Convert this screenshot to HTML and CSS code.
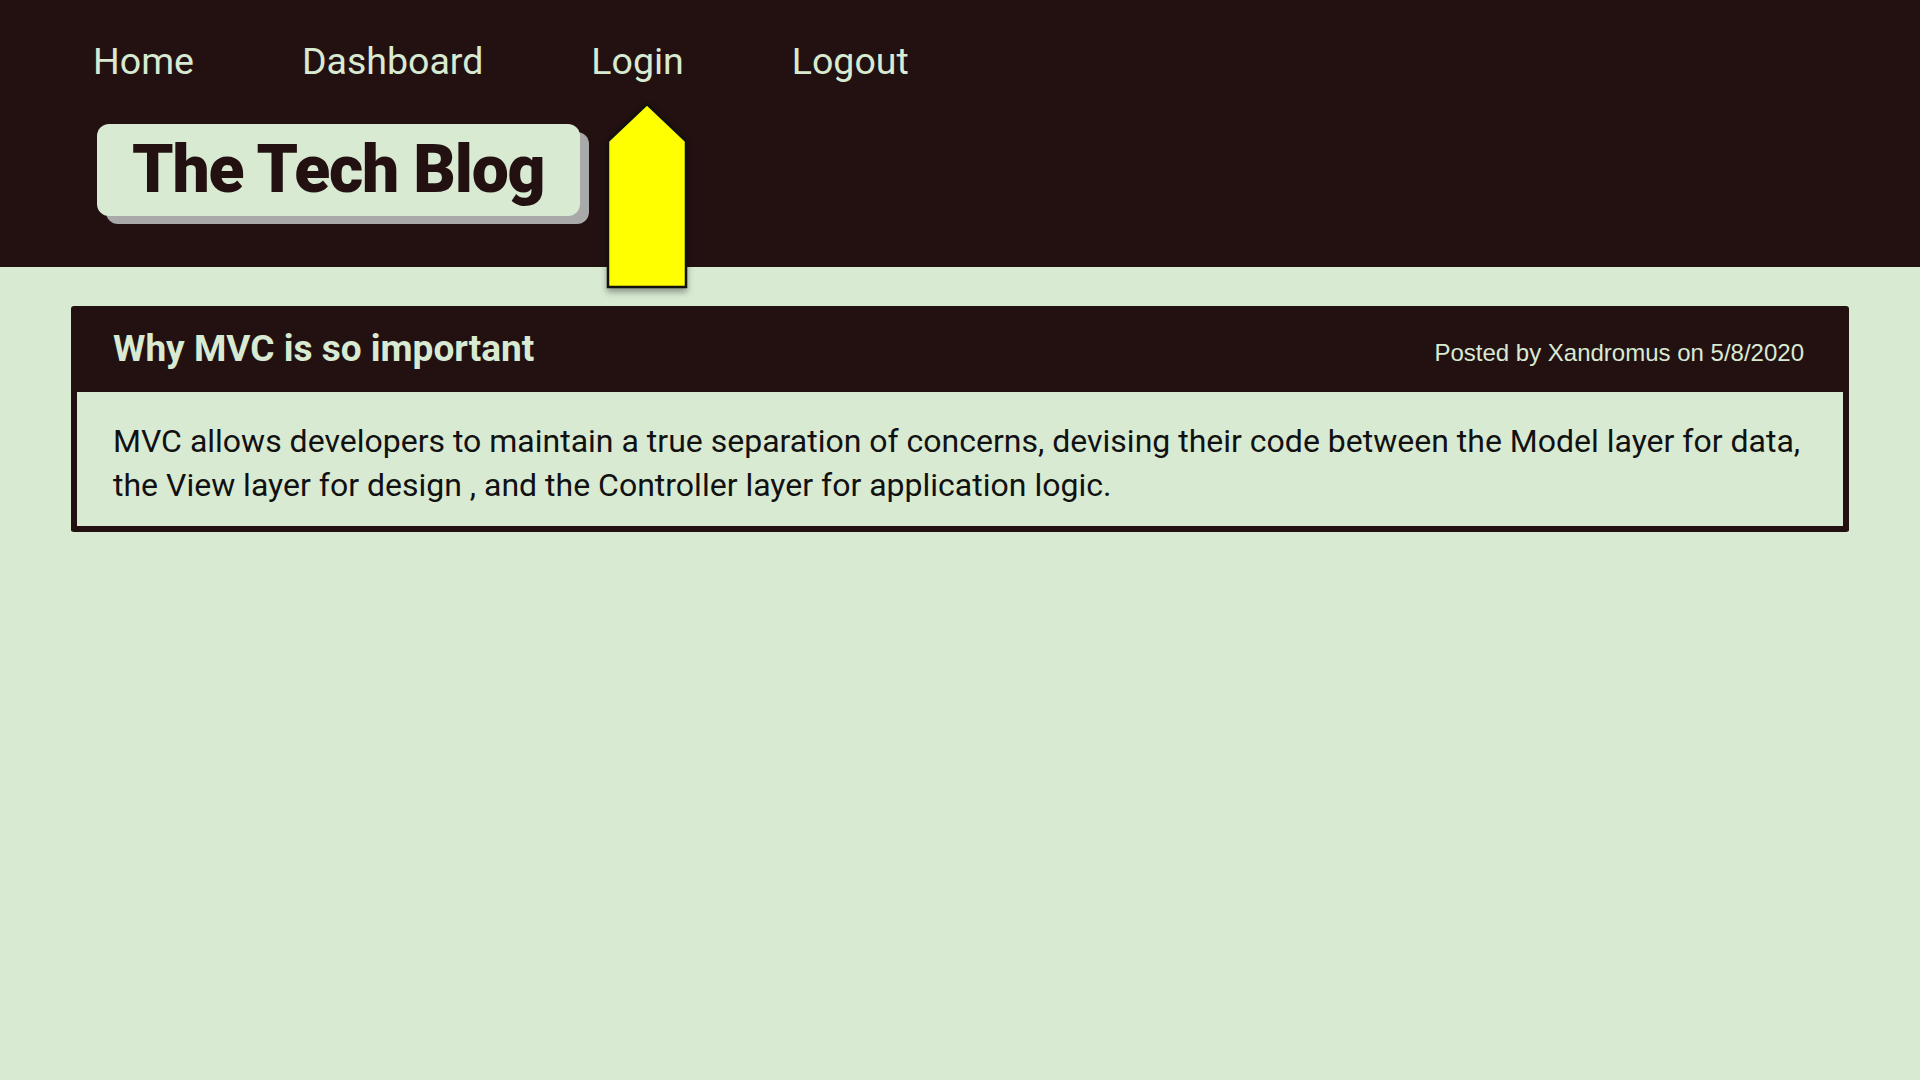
FILE: index.html
```html
<!DOCTYPE html>
<html lang="en">
<head>
<meta charset="UTF-8" />
<meta name="viewport" content="width=device-width, initial-scale=1.0"/>
<title>The Tech Blog</title>
<link rel="stylesheet" href="styles.css">
</head>
<body>
<header class="site-header">
    <nav class="nav">
        <a href="#">Home</a>
        <a href="#">Dashboard</a>
        <a href="#">Login</a>
        <a href="#">Logout</a>
    </nav>
    <div class="brand">
        <h1>The Tech Blog</h1>
    </div>
    <svg class="pointer" width="84" height="190" viewBox="0 0 84 190">
        <polygon points="42,2 81,39 81,185 3,185 3,39" fill="#ffff00" stroke="#111" stroke-width="2.5" stroke-linejoin="miter"/>
    </svg>
</header>

<main class="content">
    <article class="post">
        <div class="post-head">
            <h2>Why MVC is so important</h2>
            <span class="meta">Posted by Xandromus on 5/8/2020</span>
        </div>
        <div class="post-body">
            <p>MVC allows developers to maintain a true separation of concerns, devising their code between the Model layer for data, the View layer for design , and the Controller layer for application logic.</p>
        </div>
    </article>
</main>
</body>
</html>
```

FILE: styles.css
```css
body {
    margin: 0;
    background: #d9ead3;
    font-family: Roboto, 'Noto Sans', sans-serif;
    color: #111;
}

.site-header {
    position: relative;
    background: #231112;
    height: 267px;
    padding: 0 0 0 93px;
    box-sizing: border-box;
}

.nav {
    display: flex;
    gap: 108px;
    padding-top: 36px;
}

.nav a {
    color: #d9ead3;
    text-decoration: none;
    font-size: 37.5px;
    line-height: 50px;
}

.brand {
    display: inline-block;
    margin: 38px 0 0 4px;
    background: #d9ead3;
    border-radius: 12px;
    padding: 0 36px 0 35px;
    height: 92px;
    box-shadow: 9px 8px 0 #a9a9a9;
}

.brand h1 {
    margin: 0;
    font-size: 66px;
    font-weight: 900;
    letter-spacing: -1.2px;
    line-height: 92px;
    color: #231112;
}

.pointer {
    position: absolute;
    left: 605px;
    top: 102px;
    filter: drop-shadow(0 4px 3px rgba(0, 0, 0, 0.35));
}

.content {
    padding: 39px 71px;
}

.post {
    border: 6px solid #231112;
    border-top: none;
    border-radius: 3px;
}

.post-head {
    background: #231112;
    display: flex;
    justify-content: space-between;
    align-items: baseline;
    padding: 21px 39px 0 36px;
    height: 86px;
    box-sizing: border-box;
}

.post-head h2 {
    margin: 0;
    font-size: 37px;
    font-weight: 700;
    color: #d9ead3;
}

.meta {
    font-family: 'Liberation Sans', Arial, sans-serif;
    font-size: 24px;
    color: #d9ead3;
}

.post-body {
    background: #d9ead3;
    padding: 27px 36px 19px;
}

.post-body p {
    margin: 0;
    font-size: 32px;
    line-height: 44px;
}
```
